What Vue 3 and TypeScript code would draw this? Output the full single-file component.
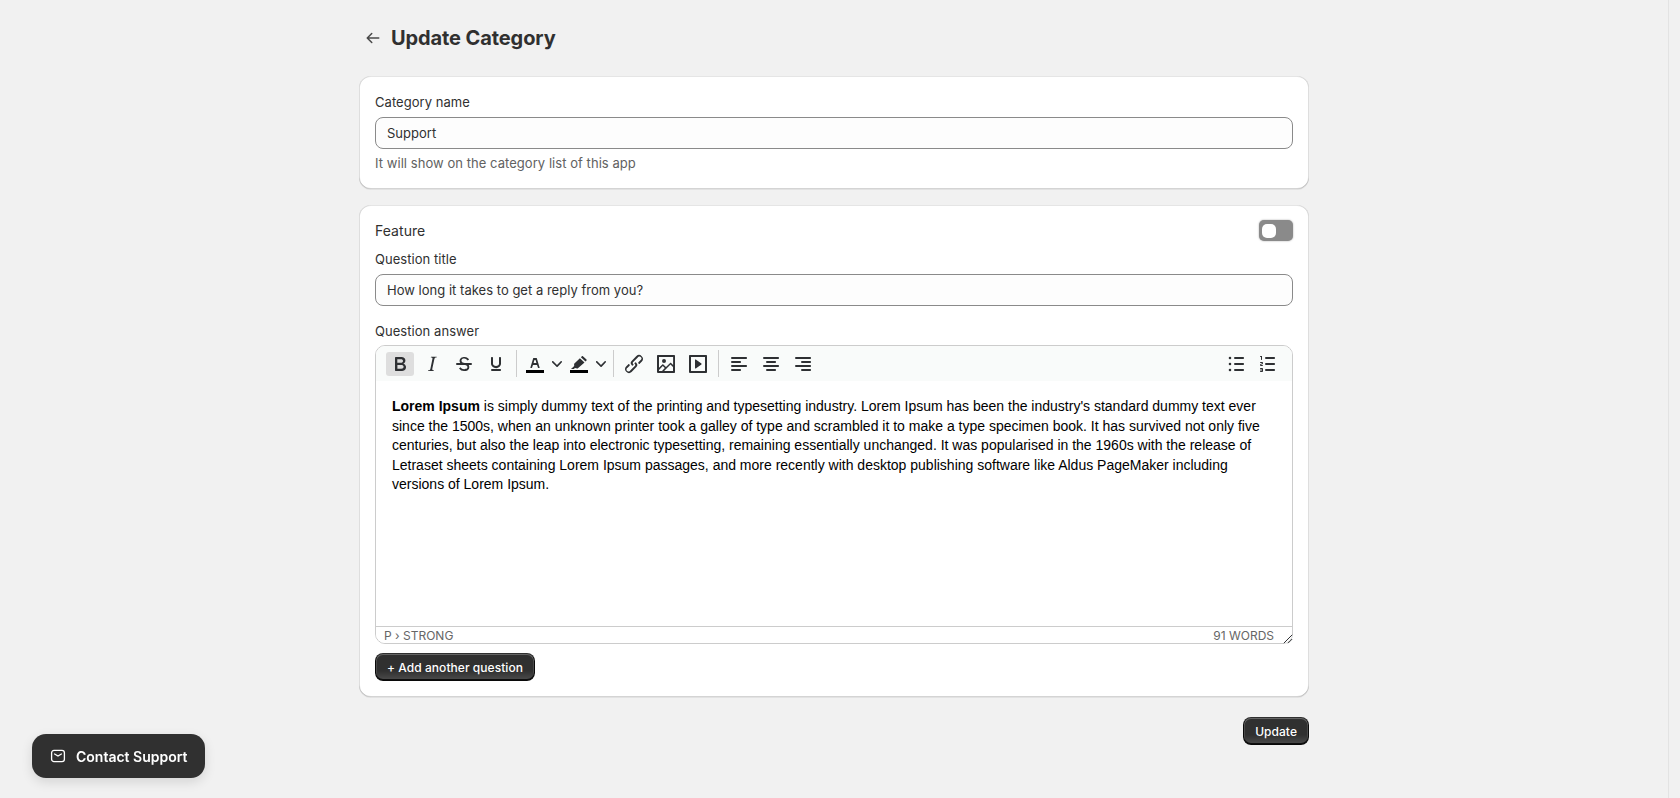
<script setup lang="ts">
type Tool = { name: string; paths: string[]; swatch?: boolean; active?: boolean; split?: boolean };

const icons: Record<string, string[]> = {
  bold: ['M7.8 19c-.3 0-.5 0-.6-.2l-.2-.5V5.7c0-.2 0-.4.2-.5l.6-.2h5c1.5 0 2.7.3 3.5 1 .7.6 1.1 1.4 1.1 2.5a3 3 0 0 1-.6 1.9c-.4.6-1 1-1.6 1.2.4.1.9.3 1.3.6s.8.7 1 1.2c.4.4.5 1 .5 1.6 0 1.3-.4 2.3-1.3 3-.8.7-2.1 1-3.8 1H7.8zm5-8.3c.6 0 1.2-.1 1.6-.5.4-.3.6-.7.6-1.3 0-1.1-.8-1.7-2.3-1.7H9.3v3.5h3.4zm.5 6c.7 0 1.3-.1 1.7-.4.4-.4.6-.9.6-1.5s-.2-1-.7-1.4c-.4-.3-1-.4-2-.4H9.4v3.8h4z'],
  italic: ['M16.7 4.7l-.1.9h-.3c-.6 0-1 0-1.4.3-.3.3-.4.6-.5 1.1l-2.1 9.8v.6c0 .5.4.8 1.4.8h.2l-.2.8H8l.2-.8h.2c1.1 0 1.8-.5 2-1.5l2-9.8.1-.5c0-.6-.4-.8-1.4-.8h-.3l.2-.9h5.8z'],
  strike: [
    'M15.6 8.5c-.5-.7-1-1.1-1.3-1.3-.6-.4-1.3-.6-2-.6-2.7 0-2.8 1.7-2.8 2.1 0 1.6 1.8 2 3.2 2.3 4.4.9 4.6 2.8 4.6 3.9 0 1.4-.7 4.1-5 4.1A6.2 6.2 0 0 1 7 16.4l1.5-1.1c.4.6 1.6 2 3.7 2 1.6 0 2.5-.4 3-1.2.4-.8.3-2-.8-2.6-.7-.4-1.6-.7-2.9-1-1-.2-3.9-.8-3.9-3.6C7.6 6 10.3 5 12.4 5c2.9 0 4.2 1.6 4.7 2.4l-1.5 1.1z',
    'M5 11h14a1 1 0 0 1 0 2H5a1 1 0 0 1 0-2z',
  ],
  underline: ['M16 5c.6 0 1 .4 1 1v5.5a4 4 0 0 1-.4 1.8l-1 1.4a5.3 5.3 0 0 1-5.5 1 5 5 0 0 1-1.6-1c-.5-.4-.8-.9-1.1-1.4a4 4 0 0 1-.4-1.8V6c0-.6.4-1 1-1s1 .4 1 1v5.5c0 .3 0 .6.2 1l.6.7a3.3 3.3 0 0 0 2.2.8 3.4 3.4 0 0 0 2.2-.8c.3-.2.4-.5.6-.8l.2-.9V6c0-.6.4-1 1-1zM8 17h8c.6 0 1 .4 1 1s-.4 1-1 1H8a1 1 0 0 1 0-2z'],
  textColor: ['M8.7 16h-.8a.5.5 0 0 1-.5-.6l2.7-9c.1-.3.3-.4.5-.4h2.8c.2 0 .4.1.5.4l2.7 9a.5.5 0 0 1-.5.6h-.8a.5.5 0 0 1-.4-.4l-.7-2.2c0-.3-.3-.4-.5-.4h-3.4c-.2 0-.4.1-.5.4l-.7 2.2c0 .3-.2.4-.4.4zm2.6-7.6l-.6 2a.5.5 0 0 0 .5.6h1.6a.5.5 0 0 0 .5-.6l-.6-2c0-.3-.3-.4-.5-.4h-.4c-.2 0-.4.1-.5.4z'],
  highlight: ['M15.9 4.3l3.6 3.2c.3.3.3.7 0 1l-1 1-4.6-4.2 1-1c.3-.3.7-.3 1 0zM12.9 6.3l4.6 4.2-6.6 5.7c-.2.2-.5.2-.7.2l-2.2-.3-1.2 1H4l3.2-3-.1-1.9c0-.3.1-.5.3-.7l5.5-5.2z'],
  link: ['M6.2 12.3a1 1 0 0 1 1.4 1.4l-2 2a2 2 0 1 0 2.6 2.8l4.8-4.8a1 1 0 0 0 0-1.4 1 1 0 1 1 1.4-1.3 2.9 2.9 0 0 1 0 4L9.6 20a3.9 3.9 0 0 1-5.5-5.5l2-2zm11.6-.6a1 1 0 0 1-1.4-1.4l2-2a2 2 0 1 0-2.6-2.8L11 10.3a1 1 0 0 0 0 1.4 1 1 0 1 1-1.4 1.3 2.9 2.9 0 0 1 0-4L14.4 4a3.9 3.9 0 0 1 5.5 5.5l-2 2z'],
  image: ['M5 15.7l3.3-3.2c.3-.3.7-.3 1 0L12 15l4.1-4c.3-.4.8-.4 1 0l2 1.9V5H5v10.7zM5 18V19h3l2.8-2.9-2-2L5 17.9zm14-3l-2.5-2.4-6.4 6.5H19v-4zM4 3h16c.6 0 1 .4 1 1v16c0 .6-.4 1-1 1H4a1 1 0 0 1-1-1V4c0-.6.4-1 1-1zm6 8a2 2 0 1 0 0-4 2 2 0 0 0 0 4z'],
  media: ['M4 3h16c.6 0 1 .4 1 1v16c0 .6-.4 1-1 1H4a1 1 0 0 1-1-1V4c0-.6.4-1 1-1zm1 2v14h14V5H5zm4.8 2.6l5.6 4a.5.5 0 0 1 0 .8l-5.6 4A.5.5 0 0 1 9 16V8a.5.5 0 0 1 .8-.4z'],
  alignLeft: ['M5 5h14c.6 0 1 .4 1 1s-.4 1-1 1H5a1 1 0 1 1 0-2zm0 4h8c.6 0 1 .4 1 1s-.4 1-1 1H5a1 1 0 1 1 0-2zm0 8h8c.6 0 1 .4 1 1s-.4 1-1 1H5a1 1 0 0 1 0-2zm0-4h14c.6 0 1 .4 1 1s-.4 1-1 1H5a1 1 0 0 1 0-2z'],
  alignCenter: ['M5 5h14c.6 0 1 .4 1 1s-.4 1-1 1H5a1 1 0 1 1 0-2zm3 4h8c.6 0 1 .4 1 1s-.4 1-1 1H8a1 1 0 1 1 0-2zm0 8h8c.6 0 1 .4 1 1s-.4 1-1 1H8a1 1 0 0 1 0-2zm-3-4h14c.6 0 1 .4 1 1s-.4 1-1 1H5a1 1 0 0 1 0-2z'],
  alignRight: ['M5 5h14c.6 0 1 .4 1 1s-.4 1-1 1H5a1 1 0 1 1 0-2zm6 4h8c.6 0 1 .4 1 1s-.4 1-1 1h-8a1 1 0 0 1 0-2zm0 8h8c.6 0 1 .4 1 1s-.4 1-1 1h-8a1 1 0 0 1 0-2zm-6-4h14c.6 0 1 .4 1 1s-.4 1-1 1H5a1 1 0 0 1 0-2z'],
  bullist: ['M11 5h8c.6 0 1 .4 1 1s-.4 1-1 1h-8a1 1 0 0 1 0-2zm0 6h8c.6 0 1 .4 1 1s-.4 1-1 1h-8a1 1 0 0 1 0-2zm0 6h8c.6 0 1 .4 1 1s-.4 1-1 1h-8a1 1 0 0 1 0-2zM4.7 6a1.3 1.3 0 1 1 2.6 0 1.3 1.3 0 0 1-2.6 0zm0 6a1.3 1.3 0 1 1 2.6 0 1.3 1.3 0 0 1-2.6 0zm0 6a1.3 1.3 0 1 1 2.6 0 1.3 1.3 0 0 1-2.6 0z'],
  numlist: ['M10 17h8c.6 0 1 .4 1 1s-.4 1-1 1h-8a1 1 0 0 1 0-2zm0-6h8c.6 0 1 .4 1 1s-.4 1-1 1h-8a1 1 0 0 1 0-2zm0-6h8c.6 0 1 .4 1 1s-.4 1-1 1h-8a1 1 0 1 1 0-2zM6 4v3.5c0 .3-.2.5-.5.5a.5.5 0 0 1-.5-.5V5h-.5a.5.5 0 0 1 0-1H6zm-1 8.8l.2.2h1.3c.3 0 .5.2.5.5s-.2.5-.5.5H4.9a1 1 0 0 1-.9-1V13c0-.4.3-.8.6-1l1.2-.4.2-.3a.2.2 0 0 0-.2-.2H4.5a.5.5 0 0 1-.5-.5c0-.3.2-.5.5-.5h1.6c.5 0 .9.4.9 1v.1c0 .4-.3.8-.6 1l-1.2.4-.2.3zM7 17v2c0 .6-.4 1-1 1H4.5a.5.5 0 0 1 0-1h1.2c.2 0 .3-.1.3-.3 0-.2-.1-.3-.3-.3H4.4a.4.4 0 1 1 0-.8h1.3c.2 0 .3-.1.3-.3 0-.2-.1-.3-.3-.3H4.5a.5.5 0 1 1 0-1H6c.6 0 1 .4 1 1z'],
};

const tool = (name: string, extra: Partial<Tool> = {}): Tool => ({ name, paths: icons[name], ...extra });

const groups: Tool[][] = [
  [tool('bold', { active: true }), tool('italic'), tool('strike'), tool('underline')],
  [tool('textColor', { split: true, swatch: true }), tool('highlight', { split: true, swatch: true })],
  [tool('link'), tool('image'), tool('media')],
  [tool('alignLeft'), tool('alignCenter'), tool('alignRight')],
];
const listTools: Tool[] = [tool('bullist'), tool('numlist')];

const categoryName = 'Support';
const questionTitle = 'How long it takes to get a reply from you?';
const answerRest =
  " is simply dummy text of the printing and typesetting industry. Lorem Ipsum has been the industry's standard dummy text ever since the 1500s, when an unknown printer took a galley of type and scrambled it to make a type specimen book. It has survived not only five centuries, but also the leap into electronic typesetting, remaining essentially unchanged. It was popularised in the 1960s with the release of Letraset sheets containing Lorem Ipsum passages, and more recently with desktop publishing software like Aldus PageMaker including versions of Lorem Ipsum.";
</script>

<template>
  <div class="shell">
    <main class="page">
      <header class="page-head">
        <button class="back" type="button" aria-label="Back">
          <svg width="20" height="20" viewBox="0 0 20 20" fill="currentColor">
            <path d="M16.5 10a.75.75 0 0 1-.75.75H6.06l3.22 3.22a.75.75 0 1 1-1.06 1.06l-4.5-4.5a.75.75 0 0 1 0-1.06l4.5-4.5a.75.75 0 0 1 1.06 1.06L6.06 9.25h9.69a.75.75 0 0 1 .75.75z" />
          </svg>
        </button>
        <h1 class="title">Update Category</h1>
      </header>

      <section class="card">
        <label class="label">Category name</label>
        <input class="input" type="text" :value="categoryName" />
        <p class="help">It will show on the category list of this app</p>
      </section>

      <section class="card card--questions">
        <div class="feature-row">
          <span class="feature">Feature</span>
          <span class="toggle"><span class="knob" /></span>
        </div>
        <label class="label">Question title</label>
        <input class="input" type="text" :value="questionTitle" />
        <label class="label answer-label">Question answer</label>

        <div class="editor">
          <div class="toolbar">
            <div class="tools">
              <div v-for="(group, i) in groups" :key="i" class="group">
                <template v-for="t in group" :key="t.name">
                  <span v-if="t.split" class="split">
                    <span class="tool">
                      <svg width="24" height="24" viewBox="0 0 24 24" fill="#2e3033">
                        <path v-for="d in t.paths" :key="d" :d="d" />
                        <path v-if="t.swatch" d="M3 18h18v3H3z" fill="#000" />
                      </svg>
                    </span>
                    <span class="chevron">
                      <svg width="10" height="10" viewBox="0 0 10 10" fill="#2e3033">
                        <path d="M8.7 2.2c.3-.3.8-.3 1 0 .4.4.4.9 0 1.2L5.7 7.8c-.3.3-.9.3-1.2 0L.2 3.4a.8.8 0 0 1 0-1.2c.3-.3.8-.3 1.1 0L5 6l3.7-3.8z" />
                      </svg>
                    </span>
                  </span>
                  <span v-else class="tool" :class="{ 'tool--active': t.active }">
                    <svg width="24" height="24" viewBox="0 0 24 24" fill="#2e3033">
                      <path v-for="d in t.paths" :key="d" :d="d" />
                    </svg>
                  </span>
                </template>
              </div>
            </div>
            <div class="group group--end">
              <span v-for="t in listTools" :key="t.name" class="tool">
                <svg width="24" height="24" viewBox="0 0 24 24" fill="#2e3033">
                  <path v-for="d in t.paths" :key="d" :d="d" />
                </svg>
              </span>
            </div>
          </div>

          <div class="content">
            <p><strong>Lorem Ipsum</strong>{{ answerRest }}</p>
          </div>

          <div class="status">
            <span>P › STRONG</span>
            <span class="words">91 WORDS</span>
          </div>
        </div>
        <svg class="grip" width="10" height="10" viewBox="0 0 10 10" fill="none" stroke="#2e3033" stroke-width="1">
          <path d="M9.2.8L.8 9.2M9.2 5L5 9.2" />
        </svg>

        <button class="btn btn--add" type="button">+ Add another question</button>
      </section>

      <div class="actions">
        <button class="btn" type="button">Update</button>
      </div>
    </main>
    <div class="scrollbar" />

    <button class="contact" type="button">
      <svg width="16" height="16" viewBox="0 0 16 16" fill="none" stroke="#fff" stroke-width="1.3">
        <rect x="1.6" y="2.4" width="12.8" height="11.2" rx="2.4" />
        <path d="M4.6 6l3.4 2 3.4-2" stroke-linecap="round" />
      </svg>
      <span>Contact Support</span>
    </button>
  </div>
</template>

<style>
html,
body {
  margin: 0;
  overflow: hidden;
  background: #f1f1f1;
}
</style>

<style scoped>
.shell {
  display: flex;
  height: 798px;
  font-family: Inter, "Liberation Sans", sans-serif;
  color: #303030;
}
.page {
  flex: 1;
  min-width: 0;
  padding: 0 359px;
  box-sizing: border-box;
}
.scrollbar {
  width: 11px;
  border-left: 1px solid #e3e3e3;
}

.page-head {
  display: flex;
  align-items: center;
  gap: 4px;
  height: 28px;
  padding: 24px 0;
}
.back {
  width: 28px;
  height: 28px;
  padding: 0;
  border: 0;
  background: none;
  color: #4a4a4a;
  display: flex;
  align-items: center;
  justify-content: center;
}
.title {
  margin: 0;
  font-size: 20px;
  line-height: 28px;
  font-weight: 650;
  letter-spacing: -0.1px;
}

.card {
  position: relative;
  background: #fff;
  border-radius: 12px;
  padding: 16px;
  margin-bottom: 16px;
  box-shadow:
    0 1px 0 0 rgba(26, 26, 26, 0.07),
    inset 0 1px 0 0 rgba(204, 204, 204, 0.5),
    inset 0 -1px 0 0 rgba(0, 0, 0, 0.17),
    inset -1px 0 0 0 rgba(0, 0, 0, 0.13),
    inset 1px 0 0 0 rgba(0, 0, 0, 0.13);
}
.card--questions {
  padding-top: 15px;
}
.label {
  display: block;
  font-size: 13px;
  line-height: 20px;
  letter-spacing: 0.05px;
  margin-bottom: 5px;
}
.input {
  display: block;
  box-sizing: border-box;
  width: 100%;
  height: 32px;
  padding: 0 11px;
  border: 1px solid #8a8a8a;
  border-radius: 8px;
  background: #fdfdfd;
  font: 13px Inter, "Liberation Sans", sans-serif;
  letter-spacing: 0.02px;
  color: #303030;
  outline: none;
}
.help {
  margin: 4px 0 0;
  font-size: 13px;
  line-height: 20px;
  letter-spacing: 0.05px;
  color: #616161;
}

.feature-row {
  display: flex;
  align-items: center;
  justify-content: space-between;
  margin-bottom: 8px;
}
.feature {
  font-size: 14px;
  line-height: 21px;
  letter-spacing: 0.05px;
}
.toggle {
  display: flex;
  align-items: center;
  box-sizing: border-box;
  width: 34px;
  height: 21px;
  padding: 0 3px;
  border-radius: 5px;
  background: #8a8a8a;
  box-shadow: 0 0 2px rgba(0, 0, 0, 0.35);
}
.knob {
  width: 14px;
  height: 14px;
  border-radius: 5px;
  background: #fff;
}
.answer-label {
  margin-top: 15px;
  margin-bottom: 4px;
}

.editor {
  display: flex;
  flex-direction: column;
  height: 299px;
  box-sizing: border-box;
  border: 1px solid #ccc;
  border-radius: 10px;
  overflow: hidden;
}
.toolbar {
  display: flex;
  justify-content: space-between;
  height: 35px;
  flex: none;
  padding: 0 4px;
  background: #f9fbfa;
}
.tools {
  display: flex;
}
.group {
  display: flex;
  align-items: flex-start;
  height: 27px;
  margin-top: 4px;
  padding: 0 4px;
  border-right: 1px solid #ccc;
}
.group:last-child,
.group--end {
  border-right: 0;
}
.tool {
  display: flex;
  align-items: center;
  justify-content: center;
  width: 28px;
  height: 24px;
  margin: 2px 2px 0;
  border-radius: 3px;
}
.tool--active {
  background: #dedede;
}
.split {
  display: flex;
  align-items: flex-start;
}
.split .tool {
  margin-left: 0;
  margin-right: 0;
}
.chevron {
  display: flex;
  align-items: center;
  justify-content: center;
  width: 16px;
  height: 24px;
  margin-top: 2px;
}

.content {
  flex: 1;
  min-height: 0;
  padding: 16px 16px 0;
  background: #fff;
  font-family: "Liberation Sans", Arial, sans-serif;
  font-size: 14px;
  line-height: 19.6px;
  color: #000;
}
.content p {
  margin: 0;
}

.status {
  display: flex;
  justify-content: space-between;
  align-items: center;
  flex: none;
  box-sizing: border-box;
  height: 17px;
  padding: 0 18px 0 8px;
  border-top: 1px solid #ccc;
  font-size: 12px;
  color: #666;
  background: #fff;
}
/* sits over the editor's rounded corner, so it stays outside the clipped box */
.grip {
  position: absolute;
  right: 16px;
  bottom: 53px;
}

.btn {
  display: block;
  height: 28px;
  padding: 0 12px;
  border: 0;
  border-radius: 8px;
  background: linear-gradient(180deg, rgba(48, 48, 48, 0) 63.53%, rgba(255, 255, 255, 0.15) 100%), #303030;
  box-shadow:
    inset 0 -1px 0 1px rgba(0, 0, 0, 0.8),
    inset 0 0 0 1px #303030,
    inset 0 0.5px 0 1.5px rgba(255, 255, 255, 0.25);
  color: #fff;
  font: 550 12px Inter, "Liberation Sans", sans-serif;
  letter-spacing: 0.05px;
}
.btn--add {
  margin-top: 9px;
}
.actions {
  display: flex;
  justify-content: flex-end;
  margin-top: 20px;
}

.contact {
  position: fixed;
  left: 32px;
  bottom: 20px;
  display: flex;
  align-items: center;
  gap: 10px;
  height: 44px;
  padding: 0 17px 0 18px;
  border: 0;
  border-radius: 14px;
  background: #303030;
  box-shadow: 0 4px 12px rgba(0, 0, 0, 0.12);
  color: #fff;
  font: 600 14px Inter, "Liberation Sans", sans-serif;
}
</style>
